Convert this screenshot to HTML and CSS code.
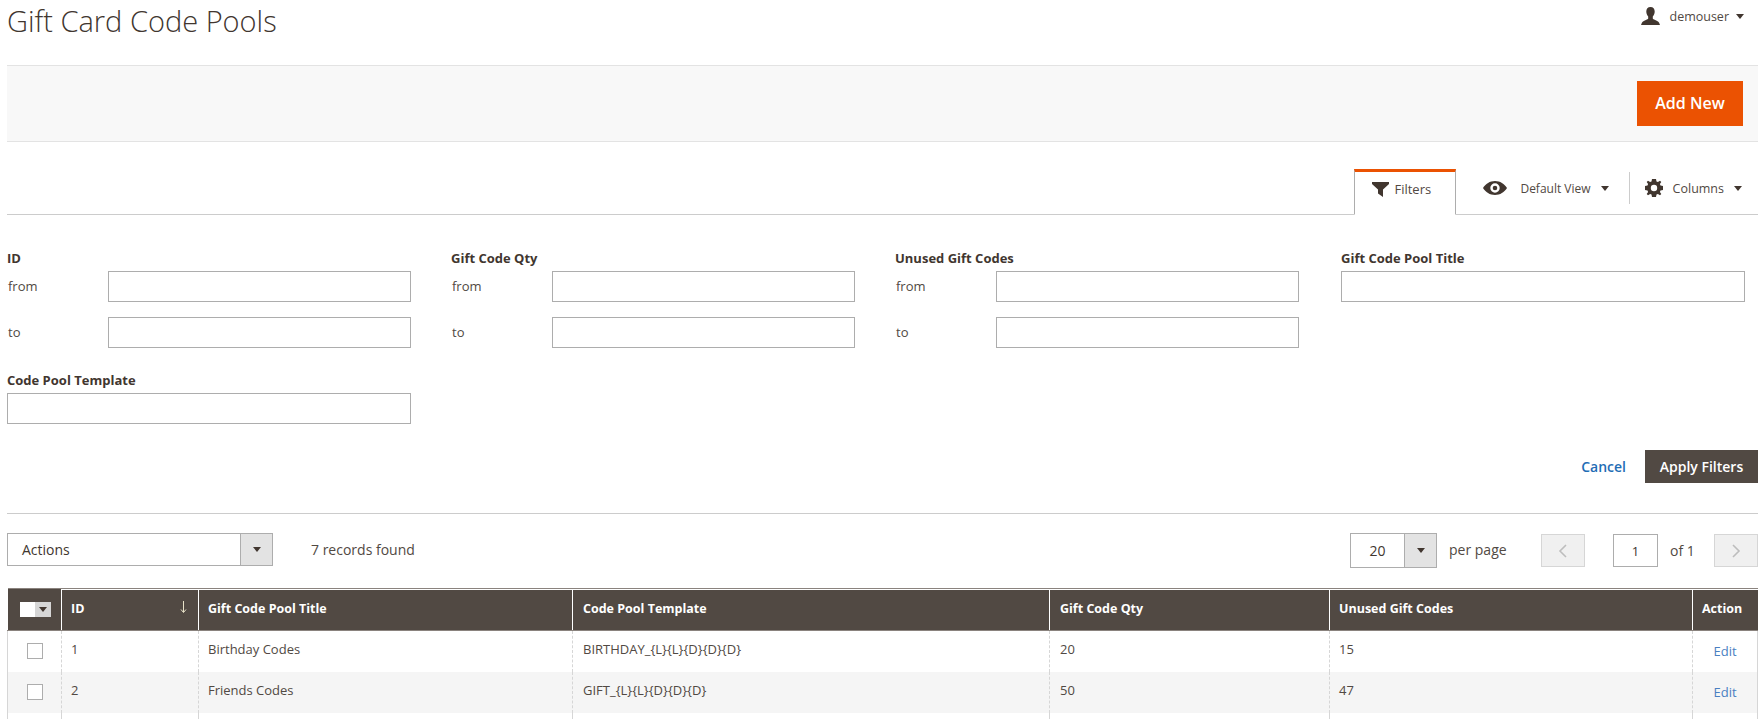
FILE: index.html
```html
<!DOCTYPE html>
<html lang="en">
<head>
  <meta charset="UTF-8">
  <title>Gift Card Code Pools</title>
  <link rel="stylesheet" href="styles.css">
</head>
<body>
  <header class="top">
    <h1 class="title">Gift Card Code Pools</h1>
    <div class="user">
      <svg class="user-icon" viewBox="0 0 19 18"><path d="M9.500 0c2.800 0 4.200 1.900 4.200 4.500 0 2-.8 3.800-1.900 5v1.700c0 .7.500 1 1.300 1.400 2.100 1 4.300 1.700 5 3.200L19 18H0l.9-2.200c.7-1.500 2.900-2.200 5-3.200.8-.4 1.300-.7 1.300-1.400V9.500c-1.100-1.200-1.900-3-1.900-5C5.300 1.900 6.700 0 9.500 0z"/></svg>
      <span>demouser</span>
      <i class="caret"></i>
    </div>
  </header>

  <div class="actions-bar">
    <button class="btn-add">Add New</button>
  </div>

  <div class="toolbar">
    <div class="tab">
      <svg class="tab-icon" viewBox="0 0 17 15"><path d="M0 0h17v2l-6 5.500V15l-5-3.500v-4L0 2z"/></svg>
      Filters
    </div>
    <div class="view">
      <svg class="eye" viewBox="0 0 24 14"><path fill-rule="evenodd" d="M12 0c5 0 9.500 2.800 12 7-2.500 4.200-7 7-12 7S2.500 11.200 0 7c2.500-4.200 7-7 12-7zm0 2.300a4.700 4.700 0 1 0 0 9.400 4.700 4.700 0 0 0 0-9.400zm0 2.400a2.300 2.300 0 1 1 0 4.600 2.300 2.300 0 0 1 0-4.600z"/></svg>
      <span>Default View</span>
      <i class="caret"></i>
    </div>
    <div class="columns">
      <svg class="gear" viewBox="0 0 18 18"><path fill-rule="evenodd" d="M7 0h4l.5 2.500 1.400.6L15 1.700 16.300 3l-1.400 2.100.6 1.400L18 7v4l-2.500.5-.6 1.400 1.400 2.100-1.300 1.300-2.100-1.400-1.400.6L11 18H7l-.5-2.500-1.400-.6L3 16.300 1.700 15l1.400-2.100-.6-1.400L0 11V7l2.500-.5.600-1.400L1.700 3 3 1.700l2.100 1.400 1.400-.6zM9 5.800a3.200 3.200 0 1 0 0 6.400 3.200 3.200 0 0 0 0-6.400z"/></svg>
      <span>Columns</span>
      <i class="caret"></i>
    </div>
  </div>

  <form class="filters">
    <div class="field">
      <div class="field-title">ID</div>
      <label class="range"><span>from</span><input type="text"></label>
      <label class="range"><span>to</span><input type="text"></label>
    </div>
    <div class="field">
      <div class="field-title">Gift Code Qty</div>
      <label class="range"><span>from</span><input type="text"></label>
      <label class="range"><span>to</span><input type="text"></label>
    </div>
    <div class="field">
      <div class="field-title">Unused Gift Codes</div>
      <label class="range"><span>from</span><input type="text"></label>
      <label class="range"><span>to</span><input type="text"></label>
    </div>
    <div class="field">
      <div class="field-title">Gift Code Pool Title</div>
      <input type="text">
    </div>
    <div class="field">
      <div class="field-title">Code Pool Template</div>
      <input type="text">
    </div>
  </form>

  <div class="filter-btns">
    <a class="cancel" href="#">Cancel</a>
    <button class="btn-apply">Apply Filters</button>
  </div>

  <div class="pager-row">
    <div class="select select-actions">
      <span class="select-value">Actions</span>
      <span class="select-arrow"><i class="caret"></i></span>
    </div>
    <span class="records">7 records found</span>
    <div class="pager">
      <div class="select select-page">
        <span class="select-value">20</span>
        <span class="select-arrow"><i class="caret"></i></span>
      </div>
      <span class="per-page">per page</span>
      <button class="page-btn"><svg viewBox="0 0 10 16"><path d="M8 2L2 8l6 6"/></svg></button>
      <input class="page-input" type="text" value="1">
      <span class="of">of 1</span>
      <button class="page-btn"><svg viewBox="0 0 10 16"><path d="M2 2l6 6-6 6"/></svg></button>
    </div>
  </div>

  <table class="grid">
    <colgroup>
      <col class="c-check"><col class="c-id"><col class="c-title"><col class="c-tpl"><col class="c-qty"><col class="c-unused"><col class="c-action">
    </colgroup>
    <thead>
      <tr>
        <th><span class="mass"><span class="mass-box"></span><span class="mass-arrow"><i class="caret"></i></span></span></th>
        <th class="sorted">ID<svg class="sort" viewBox="0 0 7 12"><path d="M3.500 0v11M1 8.500l2.500 3 2.500-3"/></svg></th>
        <th>Gift Code Pool Title</th>
        <th class="wide-pad">Code Pool Template</th>
        <th class="wide-pad">Gift Code Qty</th>
        <th>Unused Gift Codes</th>
        <th>Action</th>
      </tr>
    </thead>
    <tbody>
      <tr>
        <td class="check"><span class="box"></span></td>
        <td>1</td>
        <td>Birthday Codes</td>
        <td class="wide-pad">BIRTHDAY_{L}{L}{D}{D}{D}</td>
        <td class="wide-pad">20</td>
        <td>15</td>
        <td class="edit"><a href="#">Edit</a></td>
      </tr>
      <tr class="alt">
        <td class="check"><span class="box"></span></td>
        <td>2</td>
        <td>Friends Codes</td>
        <td class="wide-pad">GIFT_{L}{L}{D}{D}{D}</td>
        <td class="wide-pad">50</td>
        <td>47</td>
        <td class="edit"><a href="#">Edit</a></td>
      </tr>
      <tr class="more">
        <td></td><td></td><td></td><td></td><td></td><td></td><td></td>
      </tr>
    </tbody>
  </table>
</body>
</html>
```

FILE: styles.css
```css
html, body {
  margin: 0;
  padding: 0;
  height: 100vh;
  overflow: hidden;
}

body {
  padding: 0 5px 0 7px;
  background: #fff;
  color: #41362f;
  font-family: "Open Sans", "Liberation Sans", sans-serif;
  font-size: 13px;
}

.caret {
  display: inline-block;
  width: 0;
  height: 0;
  border-left: 4px solid transparent;
  border-right: 4px solid transparent;
  border-top: 5px solid #41362f;
}

/* top */
.top {
  display: flex;
  justify-content: space-between;
  height: 65px;
}
.title {
  margin: 2px 0 0;
  font-size: 29px;
  line-height: 38px;
  font-weight: 300;
}
.user {
  display: flex;
  align-items: center;
  height: 32px;
  margin-right: 14px;
  font-size: 12.500px;
  color: #514943;
}
.user-icon {
  width: 19px;
  height: 18px;
  margin-right: 9px;
  fill: #41362f;
}
.user .caret {
  margin-left: 7px;
}

.actions-bar {
  display: flex;
  justify-content: flex-end;
  align-items: center;
  height: 75px;
  padding-right: 15px;
  background: #f8f8f8;
  border-top: 1px solid #e3e3e3;
  border-bottom: 1px solid #e3e3e3;
}
.btn-add {
  width: 106px;
  height: 45px;
  padding: 0 0 2px;
  border: 0;
  background: #eb5202;
  color: #fff;
  font: 600 16px "Open Sans", sans-serif;
}

/* toolbar */
.toolbar {
  display: flex;
  justify-content: flex-end;
  align-items: flex-end;
  height: 72px;
  border-bottom: 1px solid #ccc;
}
.tab {
  display: flex;
  align-items: center;
  box-sizing: border-box;
  width: 102px;
  height: 46px;
  margin-bottom: -1px;
  padding: 0 0 8px 17px;
  border: 1px solid #adadad;
  border-top: 3px solid #eb5202;
  border-bottom: 1px solid #fff;
  font-size: 13px;
  color: #514943;
}
.tab-icon {
  width: 17px;
  height: 15px;
  margin-right: 5px;
  fill: #41362f;
}
.view, .columns {
  display: flex;
  align-items: center;
  height: 32px;
  margin-bottom: 10px;
  font-size: 12px;
  color: #514943;
}
.view {
  margin-left: 27px;
  padding-right: 20px;
  border-right: 1px solid #ccc;
}
.view .caret, .columns .caret {
  margin-left: 10px;
}
.eye {
  width: 24px;
  height: 14px;
  margin-right: 13px;
  fill: #41362f;
}
.columns {
  padding: 0 16px 0 15px;
  font-size: 12.500px;
}
.gear {
  width: 18px;
  height: 18px;
  margin-right: 10px;
  fill: #41362f;
}

/* filters */
.filters {
  display: grid;
  grid-template-columns: 404px 404px 406px 404px;
  column-gap: 40px;
  row-gap: 22px;
  padding-top: 33px;
}
.field-title {
  font-weight: 700;
  line-height: 20px;
  margin-bottom: 3px;
}
.field input, .page-input {
  box-sizing: border-box;
  border: 1px solid #adadad;
  background: #fff;
  margin: 0;
  padding: 0;
}
.field > input {
  display: block;
  width: 100%;
  height: 31px;
}
.range {
  display: flex;
  align-items: center;
  margin-bottom: 15px;
}
.range:last-child {
  margin-bottom: 0;
}
.range span {
  width: 100px;
  padding: 0 0 2px 1px;
  color: #514943;
}
.range input {
  width: 303px;
  height: 31px;
}

.filter-btns {
  display: flex;
  justify-content: flex-end;
  align-items: center;
  gap: 19px;
  margin-top: 26px;
  padding-bottom: 30px;
  border-bottom: 1px solid #ccc;
}
.cancel {
  color: #1f6db5;
  font-size: 14px;
  font-weight: 600;
  text-decoration: none;
}
.btn-apply {
  width: 113px;
  height: 33px;
  padding: 0;
  border: 0;
  background: #514943;
  color: #fff;
  font: 600 14px "Open Sans", sans-serif;
}

/* pager row */
.pager-row {
  display: flex;
  align-items: flex-start;
  height: 35px;
  margin-top: 19px;
  font-size: 14px;
  line-height: 33px;
}
.select {
  display: flex;
  box-sizing: border-box;
  border: 1px solid #adadad;
  background: #fff;
}
.select-value {
  flex: 1;
  display: flex;
  align-items: center;
}
.select-arrow {
  display: flex;
  align-items: center;
  justify-content: center;
  width: 31px;
  background: #e3e3e3;
  border-left: 1px solid #adadad;
}
.select-actions {
  width: 266px;
  height: 33px;
}
.select-actions .select-value {
  padding-left: 14px;
}
.records {
  margin-left: 38px;
  color: #514943;
}
.pager {
  display: flex;
  align-items: flex-start;
  margin-left: auto;
}
.select-page {
  width: 87px;
  height: 35px;
}
.select-page .select-value {
  justify-content: center;
}
.per-page {
  width: 92px;
  margin-left: 12px;
  color: #514943;
}
.page-btn {
  display: flex;
  align-items: center;
  justify-content: center;
  box-sizing: border-box;
  width: 44px;
  height: 33px;
  margin-top: 1px;
  padding: 0;
  border: 1px solid #d6d6d6;
  background: #f0f0f0;
}
.page-btn svg {
  width: 10px;
  height: 16px;
  fill: none;
  stroke: #bdbdbd;
  stroke-width: 1.600;
}
.page-input {
  box-sizing: border-box;
  width: 45px;
  height: 33px;
  margin: 1px 0 0 28px;
  text-align: center;
  color: #41362f;
  font: 13px "Open Sans", sans-serif;
}
.of {
  width: 44px;
  margin: 1px 0 0 12px;
  color: #514943;
}

/* grid */
.grid {
  width: 1751px;
  margin-top: 20px;
  border-collapse: collapse;
  table-layout: fixed;
}
.c-check { width: 54px; }
.c-id { width: 137px; }
.c-title { width: 374px; }
.c-tpl { width: 477px; }
.c-qty { width: 280px; }
.c-unused { width: 363px; }
.grid th {
  box-sizing: border-box;
  height: 42px;
  padding: 0 9px 3px;
  background: #514943;
  color: #fff;
  font-size: 12.500px;
  font-weight: 700;
  text-align: left;
  border-left: 1px solid #fff;
  border-top: 1px solid #8a837e;
  border-bottom: 1px solid #8a837e;
  box-shadow: inset 0 1px #fff;
  position: relative;
}
.grid th:first-child {
  border-left: 0;
  box-shadow: none;
}
.sort {
  position: absolute;
  right: 11px;
  top: 12px;
  width: 7px;
  height: 12px;
  fill: none;
  stroke: #e8e2c8;
  stroke-width: 1;
}
.mass {
  display: flex;
  width: 31px;
  height: 15px;
  margin: 3px 0 0 3px;
}
.mass-box {
  width: 15px;
  background: #fff;
}
.mass-arrow {
  display: flex;
  align-items: center;
  justify-content: center;
  width: 16px;
  background: #d6d6d6;
}
.grid td {
  box-sizing: border-box;
  height: 41px;
  padding: 0 9px 4px;
  border-left: 1px dashed #d6d6d6;
  color: #514943;
}
.grid td:first-child {
  border-left: 1px solid #d6d6d6;
}
.grid td:last-child {
  border-right: 1px solid #d6d6d6;
}
.grid .wide-pad {
  padding-left: 10px;
}
.grid .more td {
  height: 6px;
  padding: 0;
}
.alt td {
  background: #f5f5f5;
}
.box {
  display: block;
  box-sizing: border-box;
  width: 16px;
  height: 16px;
  margin: 4px 0 0 10px;
  border: 1px solid #adadad;
  background: #fff;
}
.grid .edit {
  padding: 0;
  text-align: center;
}
.edit a {
  color: #4a7fc1;
  text-decoration: none;
}
```
